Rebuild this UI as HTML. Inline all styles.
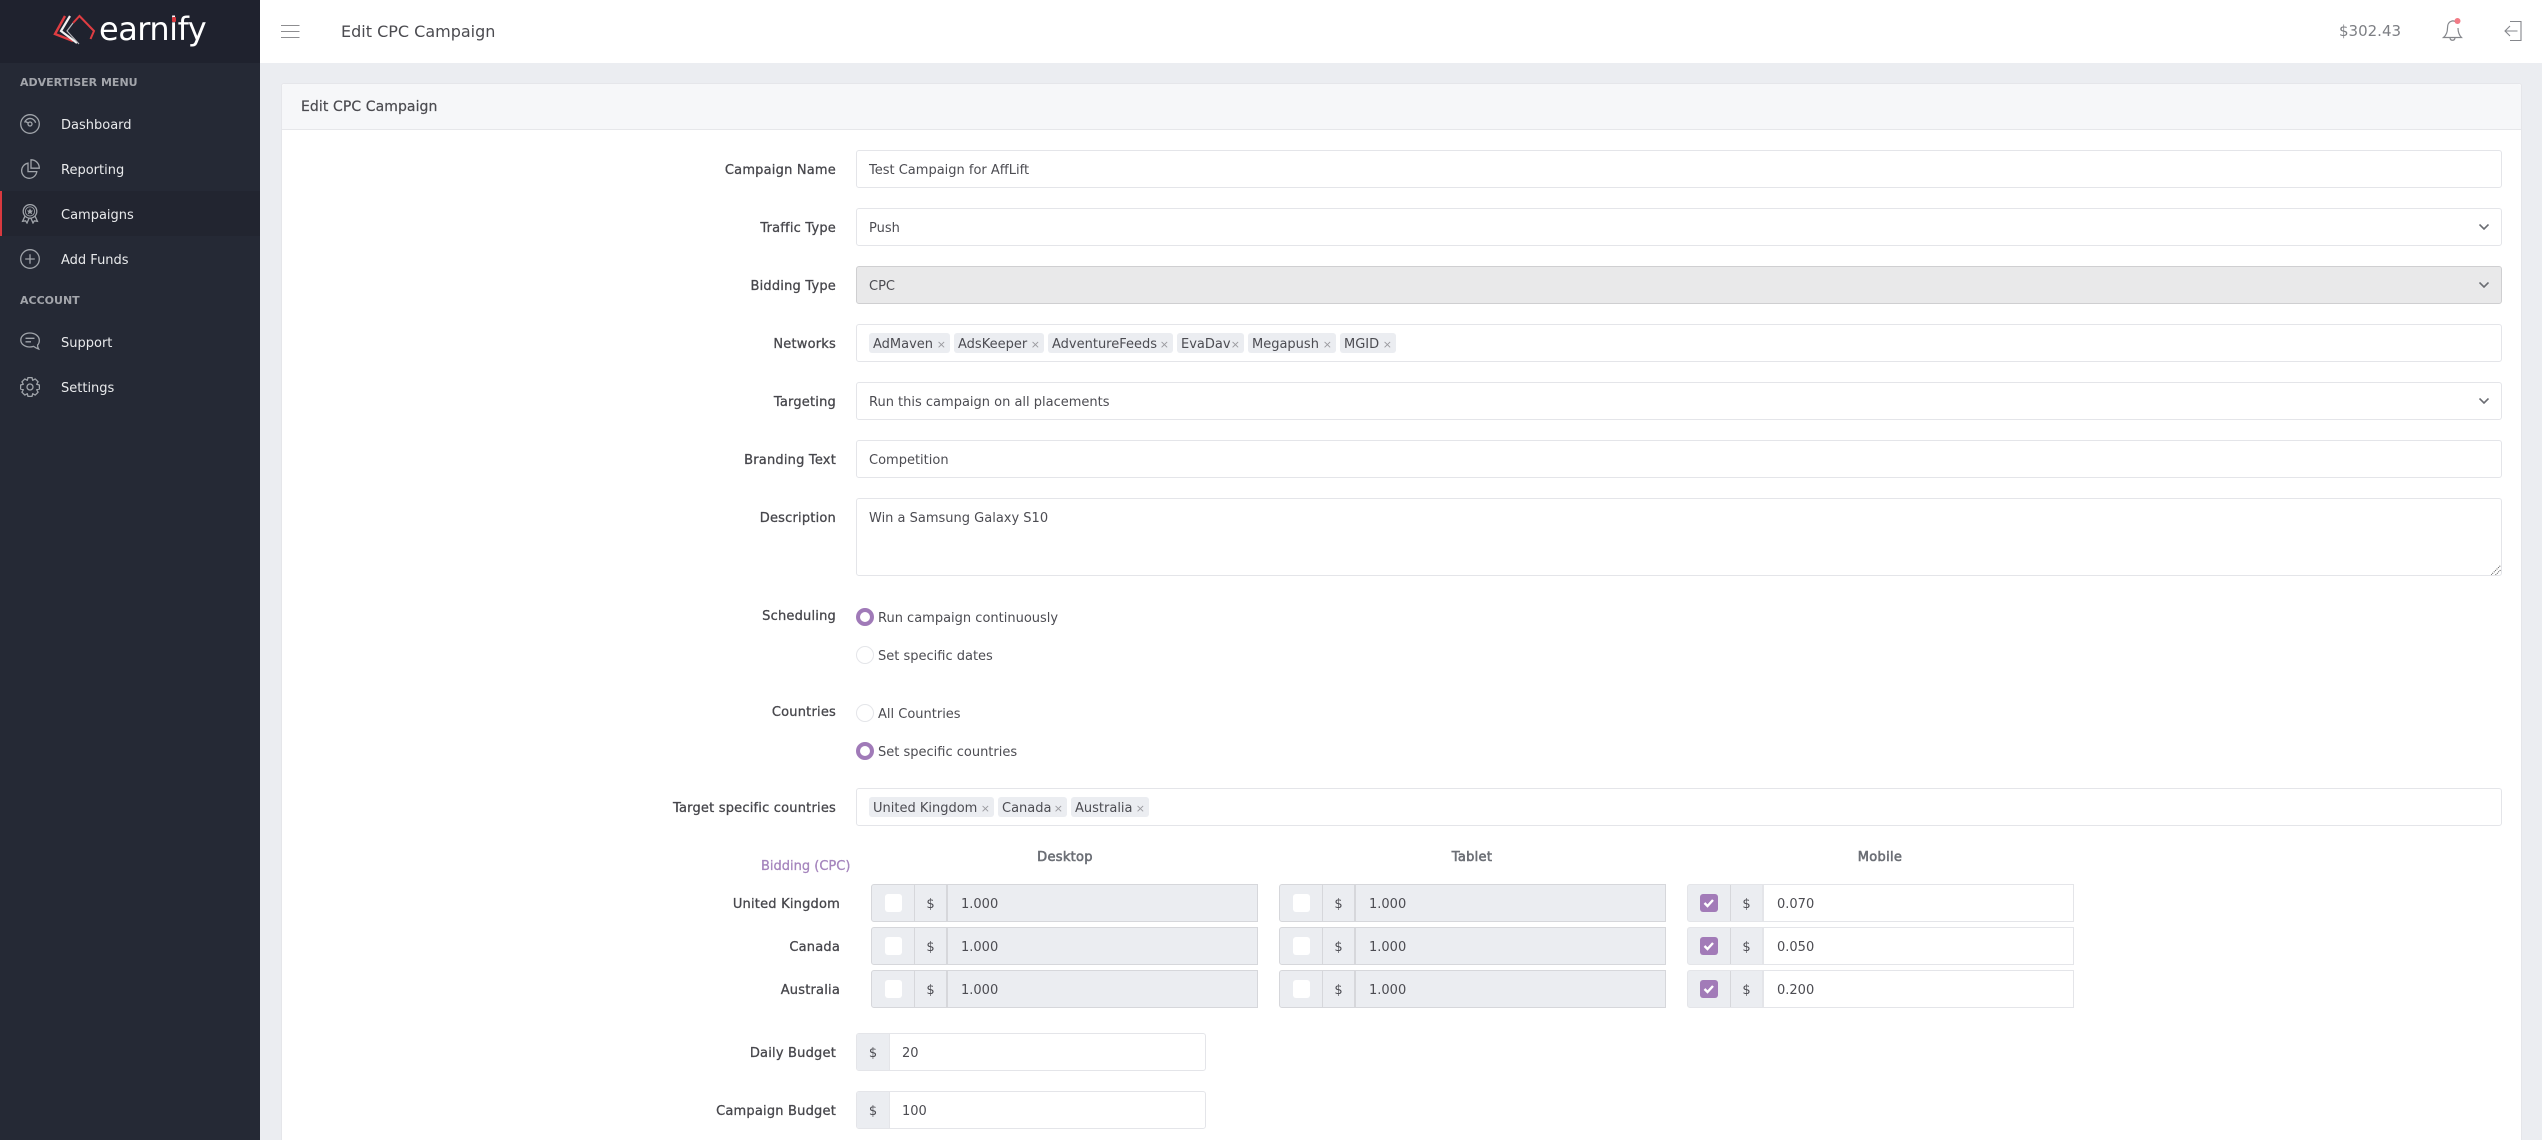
<!DOCTYPE html>
<html lang="en">
<head>
<meta charset="utf-8">
<title>Edit CPC Campaign</title>
<style>
html,body{margin:0;padding:0;width:2542px;height:1140px;overflow:hidden;background:#ebedf1}
body{position:relative;font-family:"DejaVu Sans","Liberation Sans",sans-serif;font-size:13px;color:#4c4c52}
*{box-sizing:border-box}
.a{position:absolute}
.t{position:absolute;white-space:nowrap;line-height:23px}
#side{position:absolute;left:0;top:0;width:260px;height:1140px;background:#252935}
#logo{position:absolute;left:0;top:0;width:260px;height:63px;background:#1f222e}
.sh{position:absolute;left:20px;font-weight:bold;font-size:11px;line-height:18px;color:#a3a5ab;white-space:nowrap}
.mi{position:absolute;left:61px;color:#e9eaec;line-height:23px;white-space:nowrap}
.ic{position:absolute;left:20px;width:20px;height:20px;fill:none;stroke:#a0a4aa;stroke-width:1.3}
#head{position:absolute;left:260px;top:0;width:2282px;height:63px;background:#fff}
#card{position:absolute;left:281px;top:83px;width:2241px;height:1100px;background:#fff;border:1px solid #e5e6ea;border-radius:3px}
#cardh{position:absolute;left:0;top:0;width:2239px;height:46px;background:#f6f7f9;border-bottom:1px solid #e6e7ea;border-radius:3px 3px 0 0}
.l{position:absolute;right:1706px;white-space:nowrap;line-height:23px;color:#47474c;letter-spacing:.2px;-webkit-text-stroke:.3px #47474c}
.f{position:absolute;left:856px;width:1646px;height:38px;background:#fff;border:1px solid #e4e5e9;border-radius:3px}
.f.dis{background:#e9e9ea;border-color:#cfcfd1}
.v{position:absolute;left:869px;white-space:nowrap;line-height:23px;color:#4c4c52}
.ch{position:absolute;left:2479px;width:10px;height:6px;fill:none;stroke:#6a6c72;stroke-width:1.6}
.tag{position:absolute;height:20px;background:#ebedf1;border-radius:3px;line-height:23px;padding-left:4px;white-space:nowrap;color:#4c4c52;overflow:hidden}
.tag i{position:absolute;right:4px;top:0;font-style:normal;font-size:11px;color:#9a9a9f}
.r{position:absolute;left:856px;width:18px;height:18px;border-radius:50%;border:1px solid #e4e5e9;background:#fff}
.r.on{border:4px solid #a07ab8}
.rt{position:absolute;left:878px;white-space:nowrap;line-height:23px;color:#4c4c52}
.rl{position:absolute;right:1702px;white-space:nowrap;line-height:23px;color:#47474c;letter-spacing:.2px;-webkit-text-stroke:.3px #47474c}
.c{position:absolute;width:120px;text-align:center;white-space:nowrap;line-height:23px;color:#6c6f76;letter-spacing:.3px;-webkit-text-stroke:.6px #6c6f76;top:846px}
.g{position:absolute;width:387px;height:38px;border:1px solid #d6d7db;border-radius:3px 0 0 3px;background:#ebedf1;overflow:hidden}
.g.w{border-color:#e4e5e9}
.g b{position:absolute;left:42px;top:0;width:34px;height:36px;border-left:1px solid #d6d7db;border-right:2px solid #d6d7db;font-weight:normal;text-align:center;line-height:39px;color:#4c4c52}
.g.w b{border-right-color:#e4e5e9}
.g u{position:absolute;left:76px;right:0;top:0;height:36px;line-height:39px;padding-left:13px;text-decoration:none;color:#4c4c52}
.g.w u{background:#fff}
.g s{position:absolute;left:13px;top:9px;width:17px;height:18px;background:#fff;border-radius:3px;text-decoration:none}
.g.w s{background:#a27bb8;left:12px;width:18px}
.g.w s svg{position:absolute;left:3px;top:4px;width:12px;height:10px;fill:none;stroke:#fff;stroke-width:2.4}
.b{position:absolute;left:856px;width:350px;height:38px;border:1px solid #e4e5e9;border-radius:3px;background:#fff;overflow:hidden}
.b b{position:absolute;left:0;top:0;width:33px;height:36px;background:#ebedf1;border-right:1px solid #e4e5e9;font-weight:normal;text-align:center;line-height:39px;color:#4c4c52}
.b u{position:absolute;left:45px;top:0;line-height:39px;text-decoration:none;color:#4c4c52}
</style>
</head>
<body>

<div id="side">
  <div id="logo">
    <svg class="a" style="left:50px;top:10px" width="50" height="40" viewBox="0 0 50 40" fill="none" stroke-linejoin="miter">
      <path d="M15 6 L5 24 L23 31" stroke="#df3d42" stroke-width="2.4"/>
      <path d="M20 6 L11 21 L27 33" stroke="#f2f2f2" stroke-width="2.2"/>
      <path d="M23 13 L17 21 L29 34" stroke="#b8b8bc" stroke-width="1.2"/>
      <path d="M23 13 L29.5 6 L44 21 L40.5 29" stroke="#df3d42" stroke-width="2"/>
    </svg>
    <div class="t" style="left:99px;top:9px;font-size:32px;line-height:40px;color:#fff;letter-spacing:-.5px">earnify</div>
    <div class="a" style="left:172px;top:17px;width:4px;height:5px;background:#d93a40;border-radius:1px"></div>
  </div>
  <div class="sh" style="top:74px">ADVERTISER MENU</div>

  <svg class="ic" style="top:114px" viewBox="0 0 20 20"><circle cx="10" cy="10" r="9.3"/><path d="M4.6 8.5A5.7 5.7 0 0 1 15.6 8.8"/><circle cx="10" cy="10" r="2"/><path d="M8.2 9 L5.5 7.5"/></svg>
  <div class="mi" style="top:114px">Dashboard</div>

  <svg class="ic" style="top:159px" viewBox="0 0 20 20"><path d="M8 4.2A7.6 7.6 0 1 0 16.8 12.6H8Z"/><path d="M11 .8A8.2 8.2 0 0 1 19.3 9.2H11Z"/></svg>
  <div class="mi" style="top:159px">Reporting</div>

  <div class="a" style="left:0;top:191px;width:260px;height:45px;background:#222530"></div>
  <div class="a" style="left:0;top:191px;width:2px;height:45px;background:#d9393f"></div>
  <svg class="ic" style="top:204px" viewBox="0 0 20 20"><circle cx="10" cy="7.4" r="6.8"/><circle cx="10" cy="7.4" r="4.6" stroke-width=".9"/><path d="M10 4.8 L10.8 6.6 L12.7 6.8 L11.3 8 L11.7 9.9 L10 8.9 L8.3 9.9 L8.7 8 L7.3 6.8 L9.2 6.6 Z" fill="#a0a4aa" stroke-width=".5"/><path d="M5 12 L2.6 17.3 L5.6 16.8 L7 19 L9 14.4"/><path d="M15 12 L17.4 17.3 L14.4 16.8 L13 19 L11 14.4"/></svg>
  <div class="mi" style="top:204px">Campaigns</div>

  <svg class="ic" style="top:249px" viewBox="0 0 20 20"><circle cx="10" cy="10" r="9.3"/><path d="M10 5.2V14.8M5.2 10H14.8"/></svg>
  <div class="mi" style="top:249px">Add Funds</div>

  <div class="sh" style="top:292px">ACCOUNT</div>

  <svg class="ic" style="top:332px" viewBox="0 0 20 20"><path d="M9.8 1C4.8 1 .8 3.9 .8 8c0 4.1 4 7 9 7 1.4 0 2.6-.2 3.8-.6 1.6 1.2 3.2 2 5 2.6-.8-1.4-1.1-2.6-1-4C19 11.600 19.400 9.800 19.300 8 19 3.900 14.800 1 9.800 1Z"/><path d="M5.500 6.300H14.500M5.500 9.800H11"/></svg>
  <div class="mi" style="top:332px">Support</div>

  <svg class="ic" style="top:377px" viewBox="0 0 20 20" stroke-linejoin="round"><path d="M8 .6H12L12.7 3.300L15.200 1.950L18.050 4.770L16.700 7.300L19.400 8V12L16.700 12.700L18.050 15.230L15.200 18.050L12.700 16.700L12 19.400H8L7.300 16.700L4.800 18.050L1.950 15.200L3.300 12.700L.6 12V8L3.300 7.300L1.950 4.800L4.800 1.950L7.300 3.300Z"/><circle cx="10" cy="10" r="3"/></svg>
  <div class="mi" style="top:377px">Settings</div>
</div>

<div id="head"></div>
<svg class="a" style="left:281px;top:24px" width="19" height="15" viewBox="0 0 19 15"><path d="M0 1.500H18.500M0 7.500H18.500M0 13.500H18.500" stroke="#8d8d90" stroke-width="1.100"/></svg>
<div class="t" style="left:341px;top:20px;font-size:16px;color:#4b4b50">Edit CPC Campaign</div>
<div class="t" style="left:2339px;top:20px;font-size:15px;color:#7d7f84">$302.43</div>
<svg class="a" style="left:2441px;top:17px" width="24" height="26" viewBox="0 0 24 26" fill="none" stroke="#85878c" stroke-width="1.200"><path d="M14 4.500C13 4 11.500 3.700 10.500 4.200C7.500 5 6.500 8 6.500 11C6.500 14.500 5.500 18 2.500 20.500H20.500C18 18 17 15 17 11"/><path d="M9 21C9.500 24 13.500 24 14 21"/><circle cx="16.500" cy="4" r="3" fill="#f27a85" stroke="none"/></svg>
<svg class="a" style="left:2503px;top:20px" width="20" height="22" viewBox="0 0 20 22" fill="none" stroke="#85878c" stroke-width="1.100"><path d="M7 1.500H18V20.500H7"/><path d="M14.500 11H2M7 6L2 11L7 16"/></svg>

<div id="card"><div id="cardh"></div></div>
<div class="t" style="left:301px;top:96px;font-size:14px;color:#4b4b50;letter-spacing:.08px;-webkit-text-stroke:.2px #4b4b50">Edit CPC Campaign</div>

<div class="l" style="top:159px">Campaign Name</div>
<div class="f" style="top:150px"></div>
<div class="v" style="top:159px">Test Campaign for AffLift</div>

<div class="l" style="top:217px">Traffic Type</div>
<div class="f" style="top:208px"></div>
<div class="v" style="top:217px">Push</div>
<svg class="ch" style="top:224px" viewBox="0 0 10 6"><path d="M.5 .5L5 5L9.500 .5"/></svg>

<div class="l" style="top:275px">Bidding Type</div>
<div class="f dis" style="top:266px"></div>
<div class="v" style="top:275px">CPC</div>
<svg class="ch" style="top:282px" viewBox="0 0 10 6"><path d="M.5 .5L5 5L9.500 .5"/></svg>

<div class="l" style="top:333px">Networks</div>
<div class="f" style="top:324px"></div>
<div class="tag" style="left:869px;top:333px;width:81px">AdMaven<i>×</i></div>
<div class="tag" style="left:954px;top:333px;width:90px">AdsKeeper<i>×</i></div>
<div class="tag" style="left:1048px;top:333px;width:125px">AdventureFeeds<i>×</i></div>
<div class="tag" style="left:1177px;top:333px;width:67px">EvaDav<i>×</i></div>
<div class="tag" style="left:1248px;top:333px;width:88px">Megapush<i>×</i></div>
<div class="tag" style="left:1340px;top:333px;width:56px">MGID<i>×</i></div>

<div class="l" style="top:391px">Targeting</div>
<div class="f" style="top:382px"></div>
<div class="v" style="top:391px">Run this campaign on all placements</div>
<svg class="ch" style="top:398px" viewBox="0 0 10 6"><path d="M.5 .5L5 5L9.500 .5"/></svg>

<div class="l" style="top:449px">Branding Text</div>
<div class="f" style="top:440px"></div>
<div class="v" style="top:449px">Competition</div>

<div class="l" style="top:507px">Description</div>
<div class="f" style="top:498px;height:78px"></div>
<div class="v" style="top:507px">Win a Samsung Galaxy S10</div>
<svg class="a" style="left:2491px;top:565px" width="10" height="10" viewBox="0 0 10 10"><path d="M0 10L10 0M4.500 10L10 4.500" stroke="#555" stroke-width="1" stroke-dasharray="1 1"/></svg>

<div class="l" style="top:605px">Scheduling</div>
<div class="r on" style="top:608px"></div>
<div class="rt" style="top:607px">Run campaign continuously</div>
<div class="r" style="top:646px"></div>
<div class="rt" style="top:645px">Set specific dates</div>

<div class="l" style="top:701px">Countries</div>
<div class="r" style="top:704px"></div>
<div class="rt" style="top:703px">All Countries</div>
<div class="r on" style="top:742px"></div>
<div class="rt" style="top:741px">Set specific countries</div>

<div class="l" style="top:797px">Target specific countries</div>
<div class="f" style="top:788px"></div>
<div class="tag" style="left:869px;top:797px;width:125px">United Kingdom<i>×</i></div>
<div class="tag" style="left:998px;top:797px;width:69px">Canada<i>×</i></div>
<div class="tag" style="left:1071px;top:797px;width:78px">Australia<i>×</i></div>

<div class="t" style="left:761px;top:855px;color:#a585bd;-webkit-text-stroke:.3px #a585bd">Bidding (CPC)</div>
<div class="c" style="left:1005px">Desktop</div>
<div class="c" style="left:1412px">Tablet</div>
<div class="c" style="left:1820px">Mobile</div>

<div class="rl" style="top:893px">United Kingdom</div>
<div class="rl" style="top:936px">Canada</div>
<div class="rl" style="top:979px">Australia</div>

<div class="g" style="left:871px;top:884px"><s></s><b>$</b><u>1.000</u></div>
<div class="g" style="left:871px;top:927px"><s></s><b>$</b><u>1.000</u></div>
<div class="g" style="left:871px;top:970px"><s></s><b>$</b><u>1.000</u></div>
<div class="g" style="left:1279px;top:884px"><s></s><b>$</b><u>1.000</u></div>
<div class="g" style="left:1279px;top:927px"><s></s><b>$</b><u>1.000</u></div>
<div class="g" style="left:1279px;top:970px"><s></s><b>$</b><u>1.000</u></div>
<div class="g w" style="left:1687px;top:884px"><s><svg viewBox="0 0 12 10"><path d="M1.500 5L4.500 8L10 2"/></svg></s><b>$</b><u>0.070</u></div>
<div class="g w" style="left:1687px;top:927px"><s><svg viewBox="0 0 12 10"><path d="M1.500 5L4.500 8L10 2"/></svg></s><b>$</b><u>0.050</u></div>
<div class="g w" style="left:1687px;top:970px"><s><svg viewBox="0 0 12 10"><path d="M1.500 5L4.500 8L10 2"/></svg></s><b>$</b><u>0.200</u></div>

<div class="l" style="top:1042px">Daily Budget</div>
<div class="b" style="top:1033px"><b>$</b><u>20</u></div>
<div class="l" style="top:1100px">Campaign Budget</div>
<div class="b" style="top:1091px"><b>$</b><u>100</u></div>

</body>
</html>
